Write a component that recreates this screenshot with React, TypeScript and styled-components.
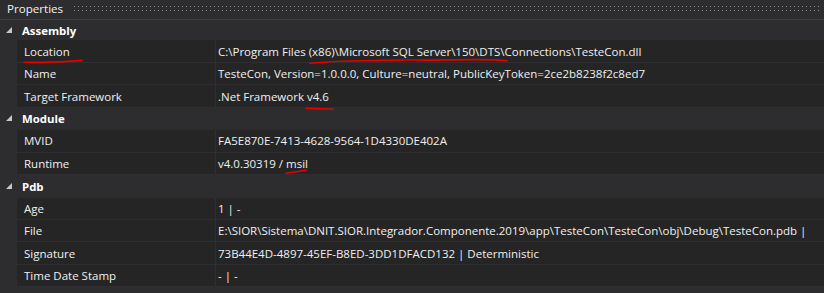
import React from "react";
import styled, { createGlobalStyle } from "styled-components";

const Global = createGlobalStyle`
  html, body { margin: 0; padding: 0; background: #2d2d30; }
  body { font-family: "Open Sans", "Segoe UI", "Noto Sans", sans-serif; }
`;

const Panel = styled.div`
  position: relative;
  width: 824px;
  height: 293px;
  overflow: hidden;
  background: #2d2d30;
  display: flex;
  flex-direction: column;
  color: #f0f0f0;
  font-size: 11.5px;
`;

const TitleBar = styled.div`
  height: 19px;
  flex: none;
  display: flex;
  align-items: flex-start;
  border-bottom: 1px solid #3f3f46;
  background: #2d2d30;
`;

const Title = styled.span`
  padding: 1px 0 0 7px;
  font-size: 11.6px;
  line-height: 16px;
  color: #f1f1f1;
`;

const Grip = styled.div`
  flex: 1;
  margin: 3px 2px 0 8px;
  height: 8px;
  background-color: #8a8a8a;
  background-image: linear-gradient(90deg, #2d2d30 3px, transparent 3px),
    linear-gradient(#2d2d30 3px, transparent 3px);
  background-size: 4px 4px;
`;

const Grid = styled.div`
  display: flex;
  flex-direction: column;
`;

const CategoryRow = styled.div<{ $h: number }>`
  height: ${(p) => p.$h}px;
  flex: none;
  display: flex;
  align-items: center;
  background: #2d2d30;
  color: #ffffff;
  font-weight: 700;
  font-size: 11.4px;
`;

const Toggle = styled.span`
  width: 22px;
  display: flex;
  justify-content: flex-start;
  padding-left: 6px;
  box-sizing: border-box;
`;

const PropRow = styled.div`
  height: 22.46px;
  flex: none;
  display: grid;
  grid-template-columns: 17px 199px 1fr;
  background: #2d2d30;
`;

const Indent = styled.div``;

const Cell = styled.div<{ $name?: boolean }>`
  display: flex;
  align-items: center;
  background: #252526;
  border-bottom: 1px solid #2f2f33;
  border-right: ${(p) => (p.$name ? "1px solid #2f2f33" : "none")};
  padding-left: ${(p) => (p.$name ? "7px" : "2px")};
  white-space: nowrap;
  overflow: hidden;
  box-sizing: border-box;
`;

const Marks = styled.svg`
  position: absolute;
  left: 0;
  top: 0;
  pointer-events: none;
`;

type Prop = [string, string];
const sections: { title: string; h: number; props: Prop[] }[] = [
  {
    title: "Assembly",
    h: 20.4,
    props: [
      ["Location", "C:\\Program Files (x86)\\Microsoft SQL Server\\150\\DTS\\Connections\\TesteCon.dll"],
      ["Name", "TesteCon, Version=1.0.0.0, Culture=neutral, PublicKeyToken=2ce2b8238f2c8ed7"],
      ["Target Framework", ".Net Framework v4.6"],
    ],
  },
  {
    title: "Module",
    h: 22.46,
    props: [
      ["MVID", "FA5E870E-7413-4628-9564-1D4330DE402A"],
      ["Runtime", "v4.0.30319 / msil"],
    ],
  },
  {
    title: "Pdb",
    h: 22.46,
    props: [
      ["Age", "1 | -"],
      ["File", "E:\\SIOR\\Sistema\\DNIT.SIOR.Integrador.Componente.2019\\app\\TesteCon\\TesteCon\\obj\\Debug\\TesteCon.pdb |"],
      ["Signature", "73B44E4D-4897-45EF-B8ED-3DD1DFACD132 | Deterministic"],
      ["Time Date Stamp", "- | -"],
    ],
  },
];

const Triangle = () => (
  <svg width="7" height="7" viewBox="0 0 7 7">
    <polygon points="6,0 6,6 0,6" fill="#c8c8c8" />
  </svg>
);

export default function App() {
  return (
    <>
      <Global />
      <Panel>
        <TitleBar>
          <Title>Properties</Title>
          <Grip />
        </TitleBar>
        <Grid>
          {sections.map((s) => (
            <React.Fragment key={s.title}>
              <CategoryRow $h={s.h}>
                <Toggle>
                  <Triangle />
                </Toggle>
                {s.title}
              </CategoryRow>
              {s.props.map(([n, v]) => (
                <PropRow key={n}>
                  <Indent />
                  <Cell $name>{n}</Cell>
                  <Cell>{v}</Cell>
                </PropRow>
              ))}
            </React.Fragment>
          ))}
        </Grid>
        <Marks width="824" height="293" viewBox="0 0 824 293">
          <g fill="none" stroke="#e60000" strokeWidth="1.6" strokeLinecap="round">
            <path d="M24 62.3 C 45 62.6, 65 62.1, 82 60.4" />
            <path d="M310 63.3 C 325 62, 345 60.8, 362 60.8 S 392 59.6, 415 60 S 455 59.4, 478 59.6 S 500 60.1, 507 60.7" />
            <path d="M306 108.3 C 315 108.6, 325 108.9, 333 109.2" />
            <path d="M286 173.2 C 293 172.3, 300 171.4, 306 170.3" />
          </g>
        </Marks>
      </Panel>
    </>
  );
}
